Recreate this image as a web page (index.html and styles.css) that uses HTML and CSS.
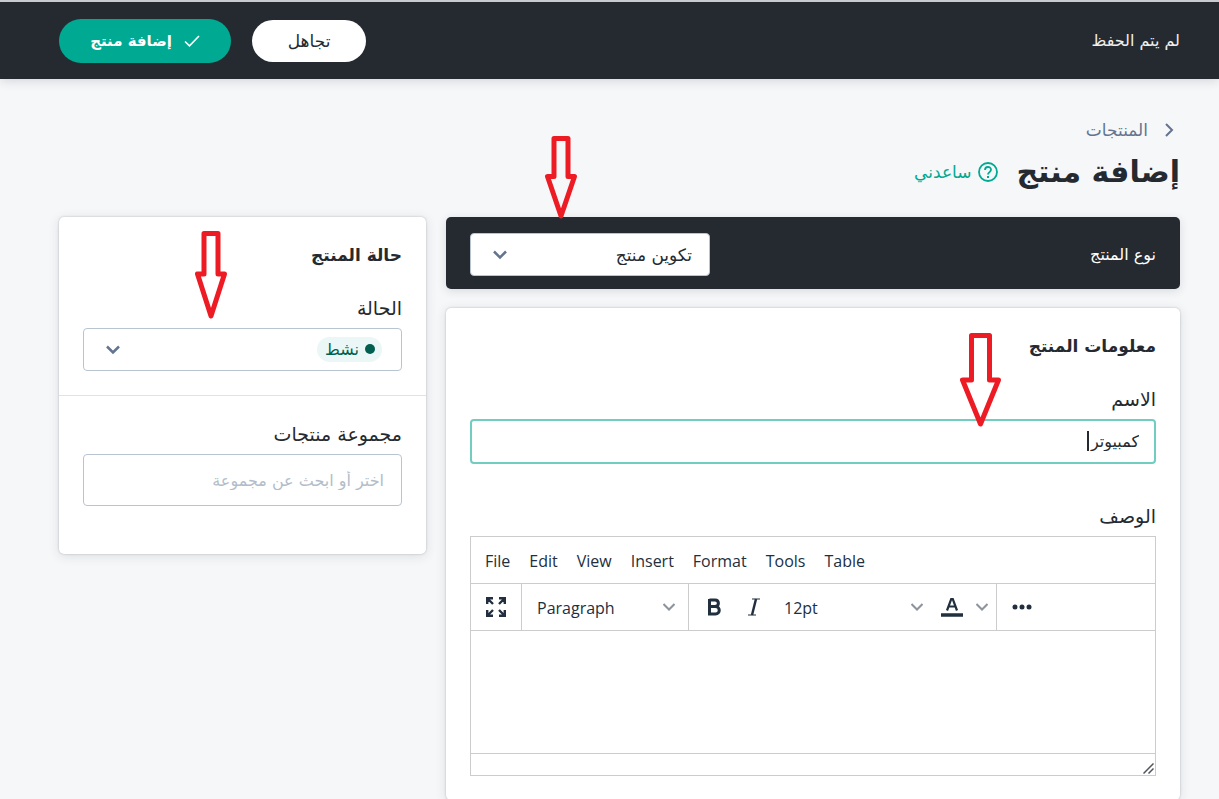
FILE: index.html
```html
<!DOCTYPE html>
<html lang="ar" dir="rtl">
<head>
  <meta charset="UTF-8">
  <meta name="viewport" content="width=device-width, initial-scale=1.0">
  <title>إضافة منتج</title>
  <link rel="stylesheet" href="styles.css">
</head>
<body>
  <header class="topbar">
    <span class="topbar-status">لم يتم الحفظ</span>
    <div class="topbar-actions">
      <button type="button" class="btn btn-light">تجاهل</button>
      <button type="button" class="btn btn-primary">
        <svg width="16" height="12" viewBox="0 0 16 12" fill="none" stroke="currentColor" stroke-width="1.6"><path d="M1 6.5l4.5 4.3L15 1"/></svg>
        إضافة منتج
      </button>
    </div>
  </header>

  <main class="page">
    <nav class="breadcrumb">
      <svg width="10" height="14" viewBox="0 0 10 14" fill="none" stroke="currentColor" stroke-width="2"><path d="M2 1l6 6-6 6"/></svg>
      <a href="#">المنتجات</a>
    </nav>
    <div class="page-title">
      <h1>إضافة منتج</h1>
      <a href="#" class="help">
        <svg width="20" height="20" viewBox="0 0 20 20" fill="none" stroke="currentColor" stroke-width="1.8"><circle cx="10" cy="10" r="9"/><path d="M7 8.1C7 4 13 4 13 7.8c0 2.2-3 2.4-3 4.7"/><path d="M9 15h2"/></svg>
        ساعدني
      </a>
    </div>

    <div class="columns">
      <div class="column">
        <section class="type-bar">
          <label for="type">نوع المنتج</label>
          <div class="select-box type-select">
            <select id="type"><option>تكوين منتج</option></select>
            <svg class="chevron" width="16" height="10" viewBox="0 0 16 10"><path d="M2 1.5l6 6 6-6"/></svg>
          </div>
          <svg class="arrow arrow-type" width="32" height="83" viewBox="0 0 32 83"><path d="M9 2.5h14v38h6.5L16 80 2.5 40.5H9z"/></svg>
        </section>

        <section class="card">
          <h2>معلومات المنتج</h2>
          <div class="field">
            <label for="name">الاسم</label>
            <div class="name-box">
              <input type="text" id="name" value="كمبيوتر">
              <span class="caret"></span>
            </div>
            <svg class="arrow arrow-name" width="41" height="94" viewBox="0 0 41 94"><path d="M11.5 2.5h18V47h9l-18 44-18-44h9z"/></svg>
          </div>
          <div class="field">
            <label for="description">الوصف</label>
            <div class="editor" dir="ltr">
              <div class="menubar">
                <button type="button">File</button>
                <button type="button">Edit</button>
                <button type="button">View</button>
                <button type="button">Insert</button>
                <button type="button">Format</button>
                <button type="button">Tools</button>
                <button type="button">Table</button>
              </div>
              <div class="toolbar">
                <div class="group group-full">
                  <button type="button" aria-label="Fullscreen">
                    <svg width="20" height="20" viewBox="0 0 20 20" fill="none" stroke="currentColor" stroke-width="2.4"><path d="M1.2 7V1.2H7M1.5 1.500l5.500 5.500M13 1.200h5.800V7M18.500 1.500L13 7M1.200 13v5.800H7M1.500 18.500L7 13M13 18.800h5.800V13M18.500 18.500L13 13"/></svg>
                  </button>
                </div>
                <div class="group">
                  <div class="tool-select block-select">
                    <select aria-label="Block"><option>Paragraph</option></select>
                    <svg class="tool-chevron" width="12" height="8" viewBox="0 0 12 8"><path d="M0.5 1L6 6.5 11.5 1"/></svg>
                  </div>
                </div>
                <div class="group group-text">
                  <button type="button" aria-label="Bold">
                    <svg width="16" height="18" viewBox="0 0 16 18" fill="none" stroke="currentColor" stroke-width="3"><path d="M3.500 2h5.500c4.500 0 4.500 6.500 0 6.500H3.500M3.500 8.500h6c5 0 5 7.500 0 7.500H3.500zM3.500 1v16"/></svg>
                  </button>
                  <button type="button" class="italic" aria-label="Italic">
                    <svg width="12" height="18" viewBox="0 0 12 18" fill="none" stroke="currentColor"><path stroke-width="1.2" d="M4 1h8M0 17h8"/><path stroke-width="2.4" d="M8 1L4 17"/></svg>
                  </button>
                  <div class="tool-select size-select">
                    <select aria-label="Font size"><option>12pt</option></select>
                    <svg class="tool-chevron" width="12" height="8" viewBox="0 0 12 8"><path d="M0.5 1L6 6.5 11.5 1"/></svg>
                  </div>
                  <button type="button" class="color" aria-label="Text color">
                    <svg width="22" height="20" viewBox="0 0 22 20" fill="none" stroke="currentColor"><path stroke-width="2.2" d="M6 13.5L10.200 2h1.600L16 13.500M7.500 9.500h7"/><path stroke-width="3.5" d="M0 18h22"/></svg>
                    <svg class="tool-chevron" width="12" height="8" viewBox="0 0 12 8"><path d="M0.5 1L6 6.5 11.5 1"/></svg>
                  </button>
                </div>
                <div class="group group-more">
                  <button type="button" aria-label="More">
                    <svg width="20" height="6" viewBox="0 0 20 6" fill="currentColor"><circle cx="3" cy="3" r="2.5"/><circle cx="10" cy="3" r="2.5"/><circle cx="17" cy="3" r="2.5"/></svg>
                  </button>
                </div>
              </div>
              <textarea id="description"></textarea>
              <div class="statusbar">
                <svg width="11" height="11" viewBox="0 0 11 11" fill="none" stroke="#50565e" stroke-width="1.5"><path d="M0.5 10.5l10-10M5.5 10.5l5-5"/></svg>
              </div>
            </div>
          </div>
        </section>
      </div>

      <aside class="card side-card">
        <section class="side-section">
          <h2>حالة المنتج</h2>
          <label for="status">الحالة</label>
          <div class="select-box status-select">
            <span class="chip"></span>
            <select id="status"><option>نشط</option></select>
            <svg class="chevron" width="16" height="10" viewBox="0 0 16 10"><path d="M2 1.5l6 6 6-6"/></svg>
          </div>
          <svg class="arrow arrow-status" width="32" height="88" viewBox="0 0 32 88"><path d="M9 2.5h14V43h6.5L16 85 2.5 43H9z"/></svg>
        </section>
        <section class="side-section group-section">
          <label for="group">مجموعة منتجات</label>
          <input type="text" id="group" class="group-input" placeholder="اختر أو ابحث عن مجموعة">
        </section>
      </aside>
    </div>
  </main>
</body>
</html>
```
FILE: styles.css
```css
* {
  box-sizing: border-box;
}

body {
  margin: 0;
  background: #f6f7f9;
  color: #252a31;
  font-family: "DejaVu Sans", sans-serif;
  font-size: 16px;
}

button,
input,
select,
textarea {
  font: inherit;
  color: inherit;
}

a {
  color: inherit;
  text-decoration: none;
}

svg {
  display: block;
  flex: none;
}

/* top bar */
.topbar {
  display: flex;
  align-items: center;
  justify-content: space-between;
  height: 79px;
  padding: 0 39px 0 59px;
  background: #252a31;
  border-top: 2px solid #c9cbce;
  box-shadow: 0 2px 10px rgba(37, 42, 49, 0.16);
}

.topbar-status {
  color: #eeeeee;
}

.topbar-actions {
  display: flex;
  align-items: center;
  gap: 21px;
}

.btn {
  display: flex;
  align-items: center;
  justify-content: center;
  gap: 12px;
  height: 42px;
  padding: 0;
  border: 0;
  border-radius: 22px;
}

.btn-light {
  width: 114px;
  background: #fff;
  font-size: 17px;
}

.btn-primary {
  width: 172px;
  height: 44px;
  background: #00a991;
  color: #fff;
  font-size: 15px;
  font-weight: bold;
}

/* page heading */
.page {
  padding: 41px 39px 0 59px;
}

.breadcrumb {
  display: flex;
  align-items: center;
  gap: 16px;
  height: 20px;
  padding-right: 6px;
  color: #637490;
  font-size: 17px;
}

.page-title {
  display: flex;
  align-items: center;
  gap: 18px;
  height: 48px;
  margin: 8px 0 21px;
}

h1 {
  margin: 0;
  font-size: 30px;
  line-height: 48px;
}

.help {
  display: flex;
  align-items: center;
  gap: 7px;
  color: #00a991;
  font-size: 17px;
}

.columns {
  display: grid;
  grid-template-columns: minmax(0, 2fr) minmax(0, 1fr);
  align-items: start;
  gap: 20px;
}

.column {
  display: flex;
  flex-direction: column;
  gap: 19px;
}

.type-bar {
  position: relative;
  display: flex;
  align-items: center;
  justify-content: space-between;
  height: 72px;
  padding: 3px 24px 0;
  background: #252a31;
  border-radius: 5px;
  color: #fff;
  box-shadow: 0 2px 10px rgba(37, 42, 49, 0.14);
}

.card {
  padding: 24px;
  background: #fff;
  border-radius: 5px;
  box-shadow: 0 0 2px rgba(37, 42, 49, 0.3), 0 2px 12px rgba(37, 42, 49, 0.12);
}

h2 {
  margin: 0 0 27px;
  font-size: 17px;
  line-height: 28px;
}

.field,
.side-section {
  position: relative;
}

.field + .field {
  margin-top: 40px;
}

.field > label,
.side-section > label {
  display: block;
  margin-bottom: 8px;
  font-size: 19px;
  line-height: 24px;
}

/* drop-downs */
.select-box {
  position: relative;
  height: 43px;
  background: #fff;
  border: 1px solid #b9c4d1;
  border-radius: 4px;
  color: #252a31;
}

.select-box select,
.tool-select select {
  position: relative;
  width: 100%;
  height: 100%;
  padding: 0 17px;
  background: transparent;
  border: 0;
  appearance: none;
}

.type-select {
  width: 240px;
  font-size: 17px;
}

.chevron {
  position: absolute;
  top: 16px;
  left: 21px;
  fill: none;
  stroke: #637490;
  stroke-width: 2.5;
}

.chip {
  position: absolute;
  top: 8px;
  right: 19px;
  width: 65px;
  height: 25px;
  background: #ebf7f6;
  border-radius: 13px;
}

.chip::before {
  content: "";
  position: absolute;
  top: 7px;
  right: 7px;
  width: 10px;
  height: 10px;
  background: #005f50;
  border-radius: 50%;
}

.select-box.status-select select {
  padding-right: 42px;
  color: #005f50;
}

/* text boxes */
.name-box {
  position: relative;
}

.name-box input,
.group-input {
  display: block;
  width: 100%;
  padding: 0 15px;
  background: #fff;
  border: 2px solid #71cdbf;
  border-radius: 4px;
  outline: 0;
}

.name-box input {
  height: 45px;
}

.caret {
  position: absolute;
  top: 12px;
  right: 67px;
  width: 2px;
  height: 20px;
  background: #252a31;
}

.group-input {
  height: 52px;
  padding: 0 17px;
  border: 1px solid #b9c4d1;
}

.group-input::placeholder {
  color: #b3bdca;
}

.side-card {
  padding: 0;
}

.side-section {
  padding: 24px;
}

.group-section {
  padding: 26px 24px 48px;
  border-top: 1px solid #dfe3e6;
}

/* rich text editor */
.editor {
  border: 1px solid #ccc;
  color: #222f3e;
  font-family: "Open Sans", "Noto Sans", sans-serif;
  font-size: 16px;
}

.editor button {
  display: flex;
  align-items: center;
  padding: 0;
  background: none;
  border: 0;
}

.menubar {
  display: flex;
  gap: 19px;
  height: 47px;
  padding: 2px 14px 0;
  border-bottom: 1px solid #ccc;
}

.toolbar {
  display: flex;
  height: 47px;
  border-bottom: 1px solid #ccc;
}

.group {
  display: flex;
  align-items: center;
  border-right: 1px solid #ccc;
}

.group-full {
  padding: 0 15px;
}

.group-text {
  gap: 18px;
  padding: 0 8px 0 17px;
}

.editor .italic {
  margin-left: 8px;
}

.group-more {
  padding: 0 15px;
  border-right: 0;
}

.tool-select {
  position: relative;
  height: 46px;
}

.block-select {
  width: 166px;
}

.size-select {
  width: 145px;
}

.block-select select {
  padding: 2px 0 0 15px;
}

.size-select select {
  padding: 2px 0 0 6px;
}

.tool-chevron {
  fill: none;
  stroke: #8d949d;
  stroke-width: 2;
}

.tool-select .tool-chevron {
  position: absolute;
  top: 19px;
  right: 13px;
}

.size-select .tool-chevron {
  right: 0;
}

.editor .color {
  gap: 13px;
}

.editor textarea {
  display: block;
  width: 100%;
  height: 122px;
  padding: 12px;
  border: 0;
  outline: 0;
  resize: none;
}

.statusbar {
  display: flex;
  align-items: flex-end;
  justify-content: flex-end;
  height: 22px;
  padding: 1px;
  border-top: 1px solid #ccc;
}

/* pointing arrows */
.arrow {
  position: absolute;
  z-index: 2;
  fill: none;
  stroke: #ed1c24;
  stroke-width: 5;
  stroke-linejoin: round;
}

.arrow-type {
  top: -81px;
  left: 99px;
}

.arrow-name {
  top: -54px;
  right: 155px;
}

.arrow-status {
  top: 14px;
  left: 136px;
}
```
